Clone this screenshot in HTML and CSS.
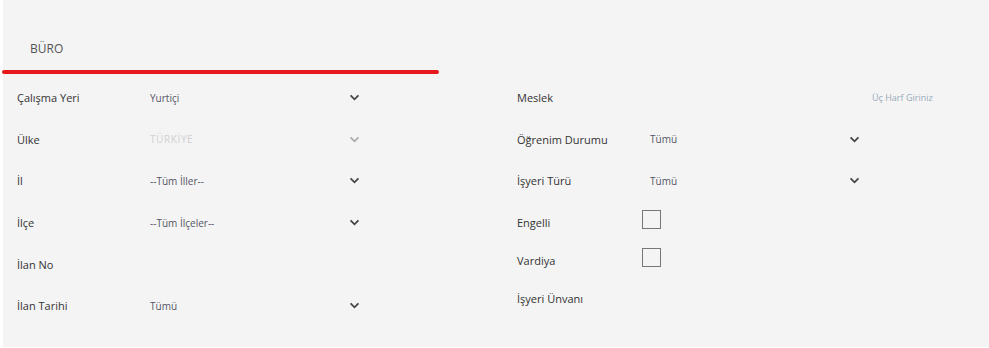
FILE: index.html
```html
<!DOCTYPE html>
<html lang="tr">

<head>
  <meta charset="UTF-8">
  <meta name="viewport" content="width=device-width, initial-scale=1.0">
  <title>İlan Arama</title>
  <link rel="stylesheet" href="styles.css">
</head>

<body>
  <div class="panel">
    <div class="tab-bar">
      <span class="tab">BÜRO</span>
    </div>
    <div class="tab-line"></div>

    <form class="search-form">
      <!-- sol sütun -->
      <div class="col">
        <div class="row">
          <label class="label">Çalışma Yeri</label>
          <div class="select"><span>Yurtiçi</span><svg class="chev" viewBox="0 0 12 8"><polyline points="1.5,1.5 6,6 10.5,1.5" /></svg></div>
        </div>
        <div class="row">
          <label class="label">Ülke</label>
          <div class="select disabled"><span>TÜRKİYE</span><svg class="chev" viewBox="0 0 12 8"><polyline points="1.5,1.5 6,6 10.5,1.5" /></svg></div>
        </div>
        <div class="row">
          <label class="label">İl</label>
          <div class="select"><span>--Tüm İller--</span><svg class="chev" viewBox="0 0 12 8"><polyline points="1.5,1.5 6,6 10.5,1.5" /></svg></div>
        </div>
        <div class="row">
          <label class="label">İlçe</label>
          <div class="select"><span>--Tüm İlçeler--</span><svg class="chev" viewBox="0 0 12 8"><polyline points="1.5,1.5 6,6 10.5,1.5" /></svg></div>
        </div>
        <div class="row">
          <label class="label">İlan No</label>
        </div>
        <div class="row">
          <label class="label">İlan Tarihi</label>
          <div class="select"><span>Tümü</span><svg class="chev" viewBox="0 0 12 8"><polyline points="1.5,1.5 6,6 10.5,1.5" /></svg></div>
        </div>
      </div>

      <!-- sağ sütun -->
      <div class="col">
        <div class="row">
          <label class="label">Meslek</label>
          <span class="placeholder">Üç Harf Giriniz</span>
        </div>
        <div class="row">
          <label class="label">Öğrenim Durumu</label>
          <div class="select"><span>Tümü</span><svg class="chev" viewBox="0 0 12 8"><polyline points="1.5,1.5 6,6 10.5,1.5" /></svg></div>
        </div>
        <div class="row">
          <label class="label">İşyeri Türü</label>
          <div class="select"><span>Tümü</span><svg class="chev" viewBox="0 0 12 8"><polyline points="1.5,1.5 6,6 10.5,1.5" /></svg></div>
        </div>
        <div class="row short">
          <label class="label narrow">Engelli</label>
          <span class="checkbox"></span>
        </div>
        <div class="row short">
          <label class="label narrow">Vardiya</label>
          <span class="checkbox"></span>
        </div>
        <div class="row short">
          <label class="label">İşyeri Ünvanı</label>
        </div>
      </div>
    </form>
  </div>
</body>

</html>
```

FILE: styles.css
```css
* {
  margin: 0;
  padding: 0;
  box-sizing: border-box;
}

body {
  font-family: "Open Sans", Arial, sans-serif;
  background-color: #fff;
}

.panel {
  margin-left: 3px;
  height: 347px;
  background-color: #f4f4f4;
}

.tab-bar {
  height: 70px;
  padding: 36px 0 0 27px;
}

.tab {
  font-size: 12px;
  color: #555;
}

.tab-line {
  width: 437px;
  height: 4px;
  margin-left: -1px;
  background-color: #e8191c;
  border-radius: 2px;
}

.search-form {
  display: grid;
  grid-template-columns: 500px 1fr;
  padding: 3px 0 0 14px;
}

.row {
  display: flex;
  align-items: center;
  height: 41.6px;
}

.row.short {
  height: 38px;
}

.label {
  width: 133px;
  font-size: 11px;
  color: #333;
}

.row.short .label {
  margin-top: 4px;
}

.label.narrow {
  width: 125px;
}

.select {
  display: flex;
  align-items: center;
  justify-content: space-between;
  width: 214px;
  font-size: 10px;
  color: #556;
}

.select.disabled {
  color: #d0d0d0;
  letter-spacing: 0.6px;
}

.chev {
  width: 11px;
  height: 7px;
  margin-right: 4px;
  fill: none;
  stroke: #444;
  stroke-width: 2;
}

.select.disabled .chev {
  stroke: #aaa;
}

.placeholder {
  margin-left: 222px;
  font-size: 9px;
  color: #9ab;
}

.checkbox {
  width: 19px;
  height: 19px;
  margin-bottom: 2px;
  border: 1px solid #777;
  background-color: #f4f4f4;
}
```
